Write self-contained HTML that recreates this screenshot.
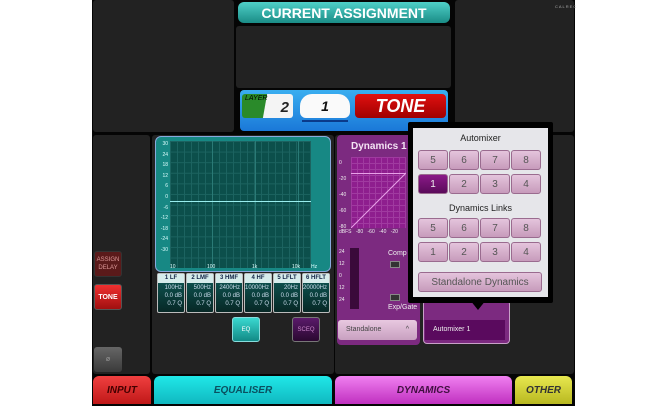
<!DOCTYPE html>
<html><head><meta charset="utf-8"><style>
*{margin:0;padding:0;box-sizing:border-box}
body{width:650px;height:406px;background:#fff;position:relative;overflow:hidden;font-family:"Liberation Sans",sans-serif}
.a{position:absolute}
.pn{position:absolute;background:#222;border-radius:3px}
.c{display:flex;align-items:center;justify-content:center}
.tab{position:absolute;top:376px;height:28px;border-radius:6px 6px 0 0;font-style:italic;font-weight:bold;font-size:10px;display:flex;align-items:center;justify-content:center}
.pb{position:absolute;height:20px;width:30px;background:linear-gradient(#e4c4dc,#c79bbb);border:1px solid #9a6b8f;border-radius:3px;color:#555;font-size:10px;display:flex;align-items:center;justify-content:center}
.band{position:absolute;top:273px;width:28px;height:40px;border:1px solid #bbb;border-radius:2px;background:linear-gradient(#0f5a57,#072826);color:#cde;font-size:6px;text-align:right;padding-right:2px;line-height:8px}
.band b{display:block;background:#d6eceb;color:#124;font-size:6px;height:9px;line-height:9px;text-align:center;margin:0 -2px 1px 0}
</style></head><body>
<div class="a" style="left:92px;top:0;width:483px;height:406px;background:#050505"></div>
<div class="pn" style="left:93px;top:0;width:141px;height:132px"></div>
<div class="pn" style="left:455px;top:0;width:119px;height:132px"></div>
<div class="a" style="left:555px;top:4px;font-size:4px;color:#aaa;letter-spacing:1px">CALREC</div>
<div class="a c" style="left:238px;top:2px;width:212px;height:21px;border-radius:6px;background:linear-gradient(#4fd0c8,#1a8c86);color:#fff;font-weight:bold;font-size:14px">CURRENT ASSIGNMENT</div>
<div class="pn" style="left:236px;top:26px;width:215px;height:62px"></div>
<div class="a" style="left:240px;top:90px;width:208px;height:41px;border-radius:4px;background:linear-gradient(#3aaef0,#1a78d8)"></div>
<div class="a" style="left:242px;top:94px;width:51px;height:24px;border-radius:3px;background:linear-gradient(100deg,#2a8a2a 45%,#f4f4f4 46%)"><span class="a" style="left:3px;top:1px;font-size:7px;font-style:italic;color:#000">LAYER</span><span class="a" style="right:4px;top:5px;font-size:15px;font-style:italic;font-weight:bold;color:#222">2</span></div>
<div class="a c" style="left:300px;top:94px;width:50px;height:24px;background:#fafafa;border-radius:12px 12px 6px 6px;font-size:14px;font-weight:bold;font-style:italic;color:#111">1</div>
<div class="a" style="left:302px;top:120px;width:46px;height:2px;background:#0a3a8a"></div>
<div class="a c" style="left:355px;top:94px;width:91px;height:24px;border-radius:4px;background:linear-gradient(#e01010,#a00000);color:#fff;font-weight:bold;font-style:italic;font-size:18px">TONE</div>

<div class="pn" style="left:93px;top:135px;width:57px;height:239px"></div>
<div class="a c" style="left:94px;top:251px;width:28px;height:26px;border-radius:3px;background:#5a1a1a;border:1px solid #333;color:#d99;font-size:6px;text-align:center;line-height:8px">ASSIGN<br>DELAY</div>
<div class="a c" style="left:94px;top:284px;width:28px;height:26px;border-radius:3px;background:linear-gradient(#f03030,#a01010);border:1px solid #555;color:#fff;font-size:7px;font-weight:bold">TONE</div>
<div class="a c" style="left:94px;top:347px;width:28px;height:25px;border-radius:3px;background:linear-gradient(#666,#3a3a3a);color:#999;font-size:7px">ø</div>

<div class="pn" style="left:152px;top:135px;width:182px;height:239px"></div>
<div class="a" style="left:155px;top:136px;width:176px;height:136px;border:1px solid #8ad;border-radius:6px;background:#178884"></div>
<div class="a" style="left:170px;top:141px;width:141px;height:127px;background-color:#0c4f4b;background-image:linear-gradient(#1c6360 1px,transparent 1px),linear-gradient(90deg,#1c6360 1px,transparent 1px);background-size:7px 10.6px"></div>
<div class="a" style="left:212px;top:141px;width:1px;height:127px;background:#2a7a76"></div>
<div class="a" style="left:255px;top:141px;width:1px;height:127px;background:#2a7a76"></div>
<div class="a" style="left:298px;top:141px;width:1px;height:127px;background:#2a7a76"></div>
<div class="a" style="left:170px;top:201px;width:141px;height:1px;background:#9ee"></div>
<div class="a" style="left:158px;top:139px;font-size:5px;color:#dff;line-height:10.6px;text-align:right;width:10px">30<br>24<br>18<br>12<br>6<br>0<br>-6<br>-12<br>-18<br>-24<br>-30</div>
<div class="a" style="left:170px;top:264px;width:150px;font-size:5px;color:#dff"><span class="a" style="left:0">10</span><span class="a" style="left:37px">100</span><span class="a" style="left:82px">1k</span><span class="a" style="left:122px">10k</span><span class="a" style="left:141px">Hz</span></div>
<div class="band" style="left:157px"><b>1 LF</b>100Hz<br>0.0 dB<br>0.7 Q</div>
<div class="band" style="left:186px"><b>2 LMF</b>500Hz<br>0.0 dB<br>0.7 Q</div>
<div class="band" style="left:215px"><b>3 HMF</b>2400Hz<br>0.0 dB<br>0.7 Q</div>
<div class="band" style="left:244px"><b>4 HF</b>10000Hz<br>0.0 dB<br>0.7 Q</div>
<div class="band" style="left:273px"><b>5 LFLT</b>20Hz<br>0.0 dB<br>0.7 Q</div>
<div class="band" style="left:302px"><b>6 HFLT</b>20000Hz<br>0.0 dB<br>0.7 Q</div>
<div class="a c" style="left:232px;top:317px;width:28px;height:25px;border-radius:3px;background:linear-gradient(#3ad8d0,#128a86);border:1px solid #8dd;color:#fff;font-size:6px">EQ</div>
<div class="a c" style="left:292px;top:317px;width:28px;height:25px;border-radius:3px;background:linear-gradient(#5a1a6a,#2a0830);border:1px solid #777;color:#c8c;font-size:6px">SCEQ</div>

<div class="pn" style="left:335px;top:135px;width:239px;height:239px"></div>
<div class="a" style="left:337px;top:135px;width:83px;height:210px;background:#7c2a80;border-radius:4px"></div>
<div class="a" style="left:351px;top:141px;color:#f4e4f4;font-weight:bold;font-size:10px">Dynamics 1</div>
<div class="a" style="left:351px;top:157px;width:55px;height:71px;background-color:#8e1e8e;background-image:linear-gradient(#a03aa0 1px,transparent 1px),linear-gradient(90deg,#a03aa0 1px,transparent 1px);background-size:6px 6px"></div>
<div class="a" style="left:351px;top:173px;width:55px;height:1px;background:#e8a0e8"></div>
<svg class="a" style="left:351px;top:157px" width="55" height="71"><line x1="0" y1="71" x2="55" y2="16" stroke="#e8a0e8" stroke-width="1"/></svg>
<div class="a" style="left:339px;top:155px;font-size:5px;color:#eee;line-height:16px">0<br>-20<br>-40<br>-60<br>-80</div>
<div class="a" style="left:339px;top:229px;font-size:5px;color:#eee;word-spacing:3px">dBFS -80 -60 -40 -20</div>
<div class="a" style="left:350px;top:248px;width:9px;height:61px;background:#3a0a3a"></div>
<div class="a" style="left:339px;top:246px;font-size:5px;color:#eee;line-height:12px">24<br>12<br>0<br>12<br>24</div>
<div class="a" style="left:388px;top:250px;font-size:7px;color:#eee">Comp</div>
<div class="a" style="left:390px;top:261px;width:10px;height:7px;background:#333;border:1px solid #888"></div>
<div class="a" style="left:390px;top:294px;width:10px;height:7px;background:#333;border:1px solid #888"></div>
<div class="a" style="left:388px;top:304px;font-size:7px;color:#eee">Exp/Gate</div>
<div class="a" style="left:338px;top:320px;width:79px;height:20px;border-radius:3px;background:linear-gradient(#e8c8e0,#c8a0c0);color:#444;font-size:7px;padding:6px 8px">Standalone<span style="float:right">^</span></div>
<div class="a" style="left:423px;top:300px;width:87px;height:44px;border:1px solid #c8a0c8;border-radius:4px;background:#7c2a80"></div>
<div class="a" style="left:425px;top:320px;width:80px;height:20px;background:#5a0a5e;color:#eee;font-size:7px;padding:6px 8px">Automixer 1</div>

<div class="a" style="left:408px;top:122px;width:145px;height:181px;background:#000;border-radius:2px"></div>
<div class="a" style="left:470px;top:300px;width:0;height:0;border-left:8px solid transparent;border-right:8px solid transparent;border-top:10px solid #000"></div>
<div class="a" style="left:413px;top:128px;width:135px;height:169px;background:#e6e6ea"></div>
<div class="a" style="left:413px;top:133px;width:135px;text-align:center;font-size:9px;color:#222">Automixer</div>
<div class="pb" style="left:418px;top:150px">5</div><div class="pb" style="left:449px;top:150px">6</div><div class="pb" style="left:480px;top:150px">7</div><div class="pb" style="left:511px;top:150px">8</div>
<div class="pb" style="left:418px;top:174px;background:linear-gradient(#8a1a88,#5a0a5a);color:#eee">1</div><div class="pb" style="left:449px;top:174px">2</div><div class="pb" style="left:480px;top:174px">3</div><div class="pb" style="left:511px;top:174px">4</div>
<div class="a" style="left:413px;top:203px;width:135px;text-align:center;font-size:9px;color:#222">Dynamics Links</div>
<div class="pb" style="left:418px;top:218px">5</div><div class="pb" style="left:449px;top:218px">6</div><div class="pb" style="left:480px;top:218px">7</div><div class="pb" style="left:511px;top:218px">8</div>
<div class="pb" style="left:418px;top:242px">1</div><div class="pb" style="left:449px;top:242px">2</div><div class="pb" style="left:480px;top:242px">3</div><div class="pb" style="left:511px;top:242px">4</div>
<div class="pb" style="left:418px;top:272px;width:124px">Standalone Dynamics</div>

<div class="tab" style="left:93px;width:58px;background:linear-gradient(#f04040,#c01818);color:#400">INPUT</div>
<div class="tab" style="left:154px;width:178px;background:linear-gradient(#20e8e8,#10b8c0);color:#0a5060">EQUALISER</div>
<div class="tab" style="left:335px;width:177px;background:linear-gradient(#f080f0,#c030c0);color:#401040">DYNAMICS</div>
<div class="tab" style="left:515px;width:57px;background:linear-gradient(#e8e850,#b8b820);color:#333">OTHER</div>
</body></html>
